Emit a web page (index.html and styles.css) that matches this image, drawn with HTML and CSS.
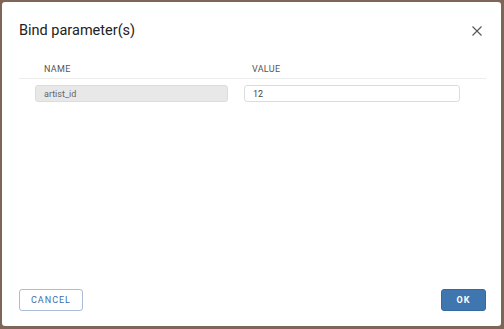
FILE: index.html
```html
<!DOCTYPE html>
<html lang="en">
<head>
    <meta charset="UTF-8">
    <meta name="viewport" content="width=device-width, initial-scale=1.0">
    <title>Bind parameter(s)</title>
    <link rel="stylesheet" href="styles.css">
</head>
<body>
    <div class="dialog">
        <div class="dialog-header">
            <h2>Bind parameter(s)</h2>
            <button class="close" aria-label="Close">
                <svg width="10" height="10" viewBox="0 0 10 10">
                    <path d="M0.5 0.5 L9.5 9.5 M9.5 0.5 L0.5 9.5" stroke="#555" stroke-width="1.1" fill="none"/>
                </svg>
            </button>
        </div>
        <div class="params">
            <div class="params-head">
                <div class="col-name">Name</div>
                <div class="col-value">Value</div>
            </div>
            <div class="params-row">
                <div class="col-name"><input class="field readonly" type="text" value="artist_id" readonly></div>
                <div class="col-value"><input class="field" type="text" value="12"></div>
            </div>
        </div>
        <div class="dialog-footer">
            <button class="btn btn-outline">Cancel</button>
            <button class="btn btn-primary">OK</button>
        </div>
    </div>
</body>
</html>
```

FILE: styles.css
```css
html, body {
    margin: 0;
    height: 100%;
}
body {
    background-color: #7d6658;
    font-family: Roboto, "Liberation Sans", Arial, sans-serif;
    padding: 2px 3px 3px 2px;
    box-sizing: border-box;
}
.dialog {
    background-color: #fff;
    height: 100%;
    border-radius: 3px;
    display: flex;
    flex-direction: column;
    padding: 0 15px 15px 17px;
    box-sizing: border-box;
}
.dialog-header {
    display: flex;
    align-items: center;
    justify-content: space-between;
    height: 57px;
}
.dialog-header h2 {
    margin: 0;
    font-size: 14.5px;
    font-weight: 400;
    color: #222;
}
.close {
    border: none;
    background: none;
    padding: 0;
    margin-right: 4px;
    display: flex;
    cursor: pointer;
}
.params {
    flex: 1;
}
.params-head, .params-row {
    display: flex;
}
.params-head {
    font-size: 9px;
    color: #555;
    text-transform: uppercase;
    letter-spacing: 0.3px;
    height: 19px;
    align-items: center;
    border-bottom: 1px solid #ececec;
}
.params-row {
    padding-top: 6px;
}
.col-name {
    width: 217px;
    padding-left: 16px;
    padding-right: 8px;
    box-sizing: border-box;
}
.col-value {
    flex: 1;
    padding-left: 8px;
    padding-right: 26px;
}
.params-head .col-name {
    padding-left: 25px;
}
.params-head .col-value {
    padding-left: 16px;
}
.field {
    display: block;
    width: 100%;
    height: 17px;
    box-sizing: border-box;
    border: 1px solid #dcdcdc;
    border-radius: 3px;
    padding: 0 8px;
    font-family: inherit;
    font-size: 9px;
    color: #444;
    background-color: #fff;
    outline: none;
}
.field.readonly {
    background-color: #e8e8e8;
    color: #666;
}
.dialog-footer {
    display: flex;
    justify-content: space-between;
    align-items: center;
}
.btn {
    height: 22px;
    border-radius: 3px;
    font-family: inherit;
    font-size: 9px;
    text-transform: uppercase;
    letter-spacing: 1px;
    cursor: pointer;
}
.btn-outline {
    width: 64px;
    background: #fff;
    border: 1px solid #a9bcd3;
    color: #3b6ea5;
}
.btn-primary {
    width: 45px;
    background: #3f76b0;
    border: 1px solid #3469a2;
    color: #fff;
    font-weight: 700;
}
```
